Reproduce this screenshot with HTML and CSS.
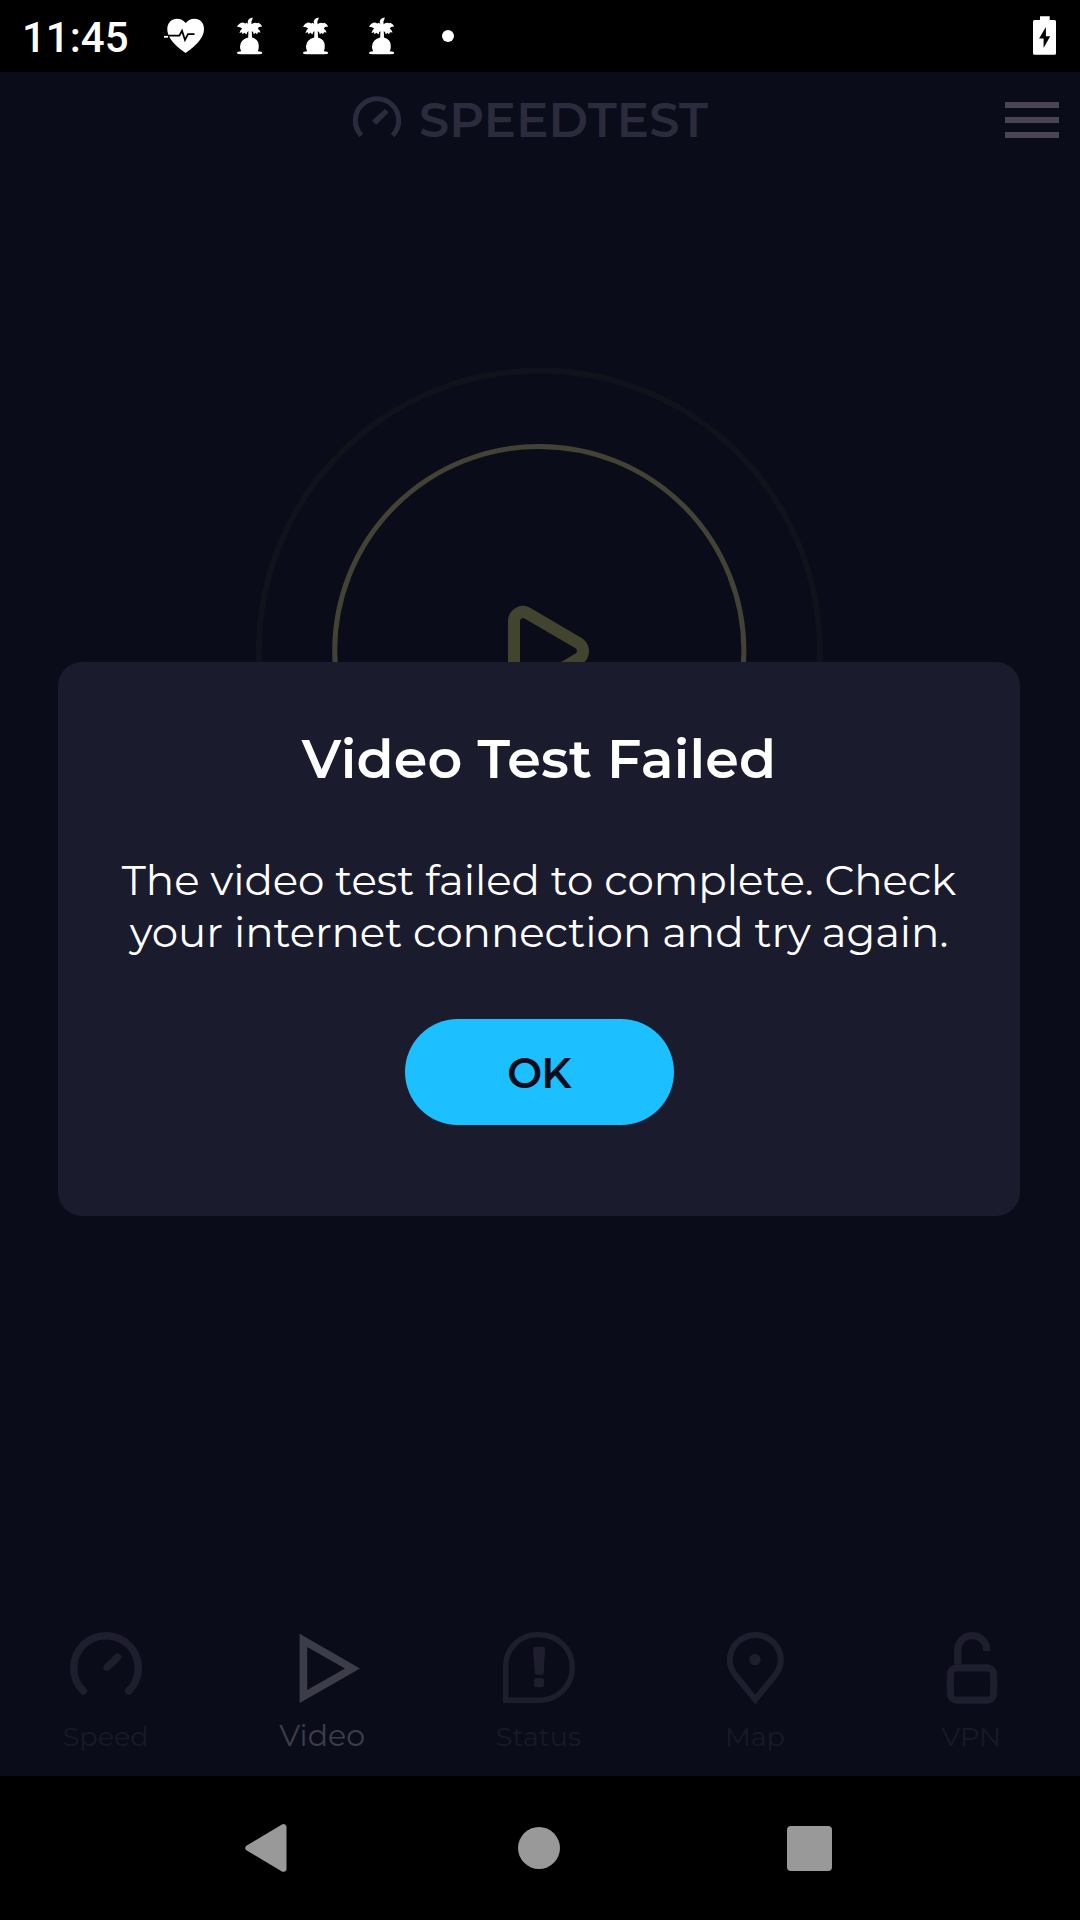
FILE: index.html
```html
<!DOCTYPE html>
<html lang="en">
<head>
<meta charset="utf-8">
<title>Speedtest</title>
<link rel="stylesheet" href="styles.css">
</head>
<body>
<svg width="0" height="0" class="defs">
  <symbol id="palm" viewBox="0 0 27 40">
    <path fill="#fff" d="M12.2 21.6 12.4 15 Q11 16 10.4 18.4 L8.4 16.8 6.4 18.2 6 16.2 3.4 17 Q4.4 13.8 6.2 12.4 L4 11.2 1 10.8 Q3 6.8 7 6.6 L9.4 7.4 10.6 6.8 12.4 8 Q10.8 5.6 13 3 Q14.6 1.4 16.8 1.4 L16.2 3.8 15.4 5.6 15.6 8.2 Q16.8 6.8 19.2 6.7 L21.4 7.2 22.4 6.8 Q25.4 8.2 26.2 10.6 L23 11 21.8 12.4 Q23.8 13.8 24.6 16.6 L22 16.2 21 18.2 19.2 16.8 18 18.4 Q17.2 16 15.8 15 L16 21.6 Q22.8 23.4 22.8 30 Q22.8 33.6 21.8 35.2 Q26.2 35.4 26.2 37 Q26.2 38.2 22 38.2 H5 Q1 38.2 1 37 Q1 35.4 5.2 35.2 Q4 33.6 4 30.5 Q4.4 23.4 12.2 21.6Z"/>
  </symbol>
</svg>
<div class="screen">
  <div class="status-bar">
    <span class="time">11:45</span>
    <svg class="heart" width="42" height="40" viewBox="0 0 42 40">
      <path fill="#fff" d="M22.7 37 C18 33.5 4.3 24.5 4.3 13 C4.3 6.5 8.8 2.7 14 2.7 C18 2.7 21 4.8 22.7 7 C24.4 4.8 27.5 2.7 31.5 2.7 C37 2.7 41 6.5 41 13 C41 24.5 27 33.8 22.7 37Z"/>
      <path fill="none" stroke="#000" stroke-width="1.8" d="M3 19.6 H16.4 L19 14.8 22 24 25 18.2 H31.5"/>
      <path stroke="#fff" stroke-width="1.8" d="M1 20.8 H5"/>
    </svg>
    <div class="palms">
      <svg width="27" height="40"><use href="#palm"/></svg>
      <svg width="27" height="40"><use href="#palm"/></svg>
      <svg width="27" height="40"><use href="#palm"/></svg>
    </div>
    <span class="more-dot"></span>
    <svg class="battery" width="24" height="40" viewBox="0 0 24 40">
      <path fill="#fff" d="M7 0.3 H16.7 V4 H21.5 Q23 4 23 5.5 V37.3 Q23 38.8 21.5 38.8 H1.5 Q0 38.8 0 37.3 V5.5 Q0 4 1.5 4 H7Z"/>
      <path fill="#000" d="M12.9 11 6.1 22.4 H10.6 V32 L17.2 20.3 H12.9Z"/>
    </svg>
  </div>

  <main class="app">
    <header class="header">
      <svg width="50" height="50" viewBox="0 0 50 50">
        <path fill="none" stroke="#2b2b3d" stroke-width="5" d="M9.3 40.4 A21.7 21.7 0 1 1 40.7 40.4"/>
        <path fill="#2b2b3d" d="M33 14 36.6 17.4 24.2 30 20 25.6Z"/>
      </svg>
      <span class="brand">SPEEDTEST</span>
      <div class="menu"><i></i><i></i><i></i></div>
    </header>

    <section class="stage">
      <svg width="568" height="568" viewBox="0 0 568 568" fill="none">
        <circle cx="284.3" cy="284" r="280.5" stroke="#12121b" stroke-width="6"/>
        <circle cx="284.3" cy="284" r="204.6" stroke="#434234" stroke-width="5"/>
        <path stroke="#43442f" stroke-width="12" d="M259 254 A9 9 0 0 1 272.5 246.2 L323.5 276.2 A9 9 0 0 1 323.5 291.8 L272.5 321.8 A9 9 0 0 1 259 314Z"/>
      </svg>
    </section>

    <nav class="tabs">
      <div class="tab">
        <svg width="72" height="72" viewBox="0 0 72 72" fill="none" stroke="#1e1e2f" stroke-width="7.4" stroke-linecap="round">
          <path d="M13.3 59 A32.3 32.3 0 1 1 58.7 59"/><path d="M37.2 35.2 47.6 25.2"/>
        </svg>
        <span class="label">Speed</span>
      </div>
      <div class="tab active">
        <svg width="72" height="72" viewBox="0 0 72 72" fill="none">
          <path fill="#3d3d4a" fill-rule="evenodd" d="M12.6 1.8 73 36.5 12.6 71Z M20.2 15 V58 L58 36.5Z"/>
        </svg>
        <span class="label">Video</span>
      </div>
      <div class="tab">
        <svg width="72" height="72" viewBox="0 0 72 72">
          <path fill="none" stroke="#1e1e2f" stroke-width="5.4" d="M2.7 68.2 V34 A31.5 31.5 0 0 1 36 2.7 A32.5 32.5 0 0 1 69.3 35.4 A32.5 32.5 0 0 1 36.5 68.2Z"/>
          <path fill="#1e1e2f" d="M32.2 14.8 H40.6 Q42.2 14.8 42.1 16.4 L40.8 41 Q40.7 42.8 39 42.8 H33.8 Q32 42.8 31.9 41 L30 16.4 Q30 14.8 32.2 14.8Z"/>
          <rect fill="#1e1e2f" x="31" y="46" width="10" height="9.2" rx="2.5"/>
        </svg>
        <span class="label">Status</span>
      </div>
      <div class="tab">
        <svg width="72" height="72" viewBox="0 0 72 72">
          <path fill="none" stroke="#1e1e2f" stroke-width="6" d="M36.3 67.5 17.5 44.5 Q10.8 36.5 10.8 28.2 A25.5 25.2 0 0 1 61.8 28.2 Q61.8 36.5 55.1 44.5Z"/>
          <circle fill="#1e1e2f" cx="36" cy="27.6" r="5.7"/>
        </svg>
        <span class="label">Map</span>
      </div>
      <div class="tab">
        <svg width="72" height="72" viewBox="0 0 72 72" fill="none" stroke="#1e1e2f" stroke-width="7.2">
          <rect x="14.3" y="35.8" width="43.4" height="32.4" rx="7"/>
          <path d="M21.8 32.5 V18 A14.3 14.3 0 0 1 50.6 18 V19"/>
        </svg>
        <span class="label">VPN</span>
      </div>
    </nav>

    <div class="dialog">
      <h1>Video Test Failed</h1>
      <p>The video test failed to complete. Check your internet connection and try again.</p>
      <button class="ok">OK</button>
    </div>
  </main>

  <div class="nav-bar">
    <svg width="44" height="50" viewBox="0 0 44 50"><path fill="#999" stroke="#999" stroke-width="6" stroke-linejoin="round" d="M4.3 25 39.5 4.2 V45.8Z"/></svg>
    <span class="home"></span>
    <span class="recents"></span>
  </div>
</div>
</body>
</html>
```
FILE: styles.css
```css
* { box-sizing: border-box; }

body {
  margin: 0;
  background: #000;
  font-family: Montserrat, Inter, sans-serif;
}

.defs { display: none; }

svg { display: block; flex: none; overflow: visible; }

.screen {
  width: 1080px;
  height: 1920px;
  overflow: hidden;
  display: flex;
  flex-direction: column;
}

/* Status bar */
.status-bar {
  height: 72px;
  padding: 0 23px 0 22px;
  display: flex;
  align-items: center;
}

.time {
  width: 141px;
  color: #fff;
  font: 500 42px/72px Roboto, sans-serif;
  padding-top: 3px;
}

.palms { display: flex; gap: 39px; margin-left: 31px; }

.more-dot {
  width: 12px;
  height: 12px;
  margin-left: 47px;
  border-radius: 50%;
  background: #fff;
}

.battery { margin-left: auto; }

/* App */
.app {
  position: relative;
  height: 1704px;
  background: #0a0c1a;
  display: flex;
  flex-direction: column;
}

.header {
  height: 96px;
  padding: 0 21px 0 352px;
  display: flex;
  align-items: center;
}

.brand {
  margin-left: 17px;
  color: #2b2b3d;
  font-size: 48px;
  font-weight: 600;
  letter-spacing: 0.15px;
}

.menu { margin-left: auto; display: grid; gap: 9px; }
.menu i { width: 54px; height: 6px; background: #474652; }

.stage {
  flex: 1;
  padding-top: 199px;
  padding-right: 2px;
  display: flex;
  justify-content: center;
  align-items: flex-start;
}

.tabs {
  width: 1082px;
  height: 144px;
  margin-left: -2px;
  display: grid;
  grid-template-columns: repeat(5, 1fr);
}

.tab {
  display: flex;
  flex-direction: column;
  align-items: center;
  gap: 17px;
}

.label {
  padding-right: 1px;
  color: #191a28;
  font-size: 27px;
  line-height: 32px;
}

.active { gap: 16px; }
.active .label { color: #3d3d4a; font-size: 30px; }

/* Dialog */
.dialog {
  position: absolute;
  left: 58px;
  top: 590px;
  width: 962px;
  height: 554px;
  padding: 65px 50px 0;
  border-radius: 24px;
  background: #1b1b2e;
  color: #fff;
  text-align: center;
}

.dialog h1 {
  margin: 0 0 63px;
  font-size: 54px;
  font-weight: 600;
  line-height: 64px;
  letter-spacing: 0.15px;
}

.dialog p {
  margin: 0 0 61px;
  font-size: 42px;
  line-height: 52px;
  letter-spacing: -0.06px;
}

.ok {
  display: block;
  width: 269px;
  height: 106px;
  margin: 0 auto;
  padding: 2px 0 0;
  border: 0;
  border-radius: 53px;
  background: #1cbfff;
  color: #0b0c1c;
  font: 600 41.5px/104px Montserrat, Inter, sans-serif;
  letter-spacing: -0.8px;
}

/* System navigation */
.nav-bar {
  height: 144px;
  padding: 0 248px 0 244px;
  display: flex;
  align-items: center;
  justify-content: space-between;
}

.home { width: 42px; height: 42px; margin-left: 2px; border-radius: 50%; background: #999; }
.recents { width: 45px; height: 45px; border-radius: 4px; background: #999; }
```
